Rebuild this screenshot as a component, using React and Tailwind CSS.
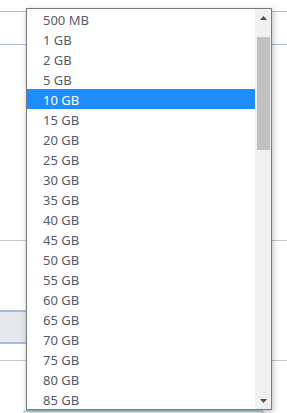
import React from 'react';

const sizes = [
  '500 MB', '1 GB', '2 GB', '5 GB', '10 GB', '15 GB', '20 GB', '25 GB', '30 GB', '35 GB',
  '40 GB', '45 GB', '50 GB', '55 GB', '60 GB', '65 GB', '70 GB', '75 GB', '80 GB', '85 GB',
];

const App = () => {
  const selected = '10 GB';

  return (
    <div
      className="relative w-[287px] h-[413px] overflow-hidden bg-white"
      style={{ fontFamily: '"Noto Sans", "Open Sans", sans-serif' }}
    >
      {/* page behind the open select */}
      <div className="flex flex-col">
        <div className="mt-[11px] h-[34px] border-y border-[#a9bad9]"></div>
        <div className="mt-[195px] h-px bg-[#c4c4c4]"></div>
        <div className="mt-[69px] h-[34px] w-[200px] border-y-2 border-[#a9bad9] bg-[#e4e7eb]"></div>
        <div className="mt-[16px] h-px bg-[#c4c4c4]"></div>
        <div className="mt-[49px] mx-[23px] h-[30px] rounded-[3px] border-2 border-[#a8d6e6] bg-white"></div>
      </div>

      {/* dropdown list */}
      <div className="absolute left-[26px] top-[8px] w-[246px] h-[402px] flex border border-[#7a7a7a] bg-white shadow-[1px_2px_6px_rgba(0,0,0,0.28)]">
        <ul className="flex-1 flex flex-col">
          {sizes.map((s) => (
            <li
              key={s}
              className={
                s === selected
                  ? 'h-[20px] overflow-hidden pl-[16px] text-[13px] leading-[22px] bg-[#1e8cff] text-white'
                  : 'h-[20px] overflow-hidden pl-[16px] text-[13px] leading-[22px] text-[#555a66]'
              }
            >
              {s}
            </li>
          ))}
        </ul>
        <div className="w-[16px] bg-[#f0f0f0] flex flex-col items-center">
          <div className="h-[17px] flex items-center justify-center">
            <svg width="7" height="4" viewBox="0 0 7 4">
              <path d="M3.5 0 L7 4 L0 4 Z" fill="#505050" />
            </svg>
          </div>
          <div className="mt-[11px] w-[13px] h-[113px] bg-[#c1c1c1]"></div>
          <div className="mt-auto h-[17px] flex items-center justify-center">
            <svg width="7" height="4" viewBox="0 0 7 4">
              <path d="M0 0 L7 0 L3.5 4 Z" fill="#505050" />
            </svg>
          </div>
        </div>
      </div>
    </div>
  );
};

export default App;
